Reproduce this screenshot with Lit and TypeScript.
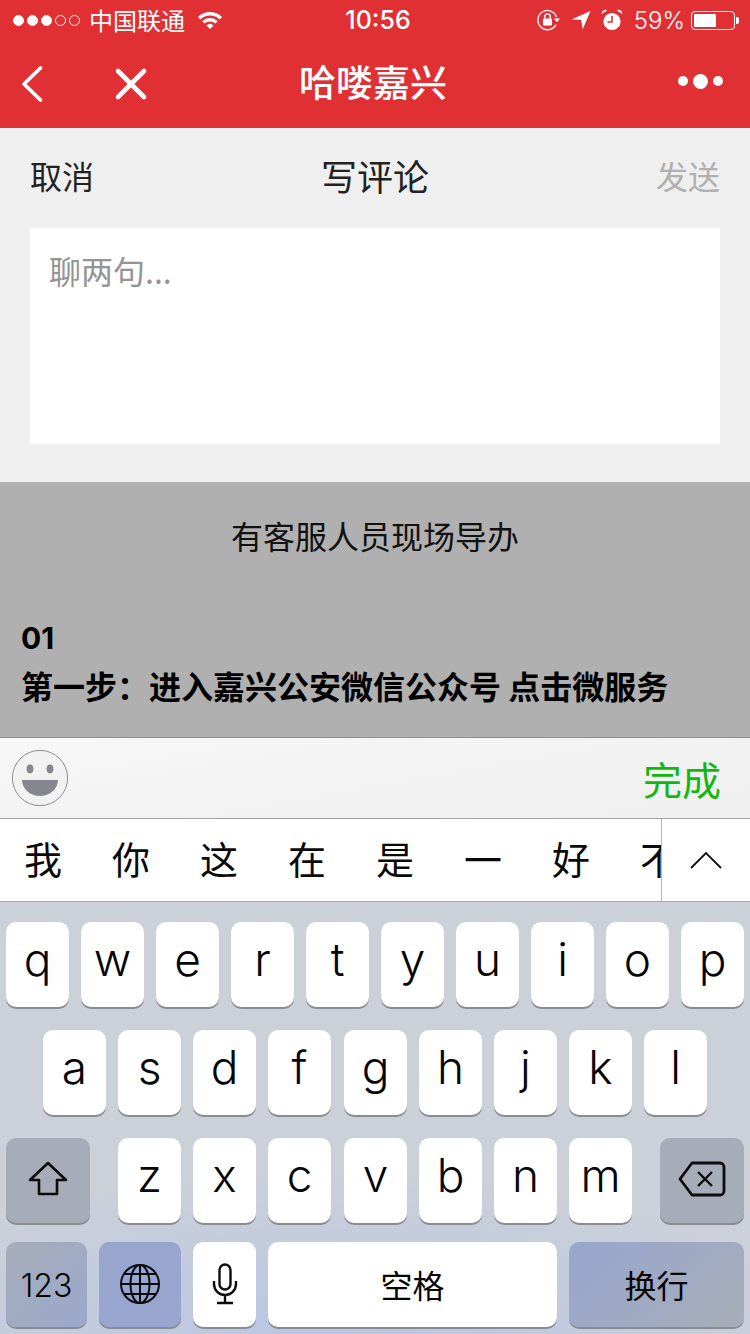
import { LitElement, html, css, svg, unsafeCSS } from "lit";
import { customElement } from "lit/decorators.js";

const CJK = unsafeCSS(`"Noto Sans CJK SC", "Inter", sans-serif`);

const wifiIcon = svg`
  <svg width="26" height="20" viewBox="0 0 26 20">
    <path d="M1 7 A17 17 0 0 1 25 7 L22.6 9.4 A13.6 13.6 0 0 0 3.4 9.4Z" fill="#fff"/>
    <path d="M5.2 11.2 A11.4 11.4 0 0 1 20.8 11.2 L18.4 13.6 A8 8 0 0 0 7.6 13.6Z" fill="#fff"/>
    <path d="M9.4 15.4 A5.4 5.4 0 0 1 16.6 15.4 L13 19Z" fill="#fff"/>
  </svg>`;

const rotationLockIcon = svg`
  <svg width="24" height="22" viewBox="0 0 24 22" fill="none">
    <path d="M19.6 8 A9.6 9.6 0 1 0 19 15.6" stroke="#fff" stroke-width="1.3"/>
    <path d="M17 9.6h6l-3 3.6Z" fill="#fff"/>
    <rect x="6" y="9.5" width="9" height="7" rx="1" fill="#fff"/>
    <path d="M7.8 9.5V7.6a2.7 2.7 0 0 1 5.4 0V9.5" stroke="#fff" stroke-width="1.4"/>
  </svg>`;

const locationIcon = svg`
  <svg width="20" height="20" viewBox="0 0 20 20">
    <path d="M19.5 1 L11.6 19.5 L10.2 9.8 L0.5 9.6Z" fill="#fff"/>
  </svg>`;

const alarmIcon = svg`
  <svg width="22" height="22" viewBox="0 0 22 22">
    <circle cx="11" cy="12.5" r="8.6" fill="#fff"/>
    <path d="M11 7V13H6.5" fill="none" stroke="#e03033" stroke-width="1.6"/>
    <path d="M0.6 5 A4 4 0 0 1 5.6 1 L6 1.6Z M21.4 5 A4 4 0 0 0 16.4 1 L16 1.6Z" fill="#fff"/>
  </svg>`;

const backIcon = svg`
  <svg width="26" height="38" viewBox="0 0 26 38" fill="none">
    <path d="M21.5 3 L5 19 L21.5 35" stroke="#fff" stroke-width="3.8" stroke-linecap="round" stroke-linejoin="round"/>
  </svg>`;

const closeIcon = svg`
  <svg width="34" height="34" viewBox="0 0 34 34" fill="none">
    <path d="M4 4 L30 30 M30 4 L4 30" stroke="#fff" stroke-width="4.6" stroke-linecap="round"/>
  </svg>`;

const smileIcon = svg`
  <svg width="58" height="58" viewBox="0 0 58 58">
    <circle cx="29" cy="29" r="27.6" fill="#f2f2f3" stroke="#8c8c90" stroke-width="1"/>
    <ellipse cx="19" cy="20" rx="3.4" ry="4.4" fill="#86868e"/>
    <ellipse cx="39" cy="20" rx="3.4" ry="4.4" fill="#86868e"/>
    <path d="M11 31 H47 A18 16 0 0 1 11 31Z" fill="#86868e"/>
  </svg>`;

const chevronIcon = svg`
  <svg width="34" height="20" viewBox="0 0 34 20" fill="none">
    <path d="M2 18 L17 3 L32 18" stroke="#111" stroke-width="1.8"/>
  </svg>`;

const shiftIcon = svg`
  <svg width="40" height="36" viewBox="0 0 40 36" fill="none">
    <path d="M20 2 L38 19 H29 V33 H11 V19 H2Z" stroke="#0c0c0e" stroke-width="2.6" stroke-linejoin="round"/>
  </svg>`;

const deleteIcon = svg`
  <svg width="48" height="36" viewBox="0 0 48 36" fill="none">
    <path d="M14 2 H42 A4 4 0 0 1 46 6 V30 A4 4 0 0 1 42 34 H14 L2 18Z" stroke="#0c0c0e" stroke-width="2.8" stroke-linejoin="round"/>
    <path d="M20 11 L34 25 M34 11 L20 25" stroke="#0c0c0e" stroke-width="2.4"/>
  </svg>`;

const globeIcon = svg`
  <svg width="42" height="42" viewBox="0 0 42 42" fill="none" stroke="#0c0c10" stroke-width="2">
    <circle cx="21" cy="21" r="19"/>
    <ellipse cx="21" cy="21" rx="9.5" ry="19"/>
    <path d="M21 2V40M2 21H40M5 11H37M5 31H37"/>
  </svg>`;

const micIcon = svg`
  <svg width="26" height="42" viewBox="0 0 26 42" fill="none" stroke="#0c0c0e" stroke-width="2.4">
    <rect x="7.5" y="1.5" width="11" height="25" rx="5.5"/>
    <path d="M2 18 V21 A11 11 0 0 0 24 21 V18 M13 32 V39 M5 40 H21"/>
  </svg>`;

@customElement("app-root")
export class AppRoot extends LitElement {
  static styles = css`
    :host {
      display: block;
      width: 750px;
      height: 1334px;
      overflow: hidden;
      background: #efeff0;
      font-family: ${CJK};
      color: #111;
    }

    .red { background: #e03033; height: 128px; color: #fff; }

    .status {
      display: flex;
      align-items: center;
      height: 40px;
      padding: 0 11px 0 13px;
    }
    .status-side { flex: 1; display: flex; align-items: center; }
    .status-side.end { justify-content: flex-end; }
    .dot {
      width: 11px;
      height: 11px;
      margin-right: 3px;
      border-radius: 50%;
      box-sizing: border-box;
      border: 1px solid #fff;
    }
    .dot.on { background: #fff; }
    .carrier { font-size: 24px; margin-left: 6px; line-height: 40px; }
    .wifi { display: flex; margin-left: 12px; }
    .time { font-family: "Inter", sans-serif; font-size: 25px; font-weight: 500; margin-left: 4px; }
    .status-icon { display: flex; margin-right: 10px; }
    .percent { font-family: "Inter", sans-serif; font-size: 24px; font-weight: 300; margin-left: 1px; }
    .battery {
      display: flex;
      align-items: center;
      margin-left: 6px;
    }
    .battery-body {
      width: 44px;
      height: 19px;
      padding: 2px;
      box-sizing: border-box;
      border: 1.5px solid #fff;
      border-radius: 4px;
    }
    .battery-fill { height: 100%; width: 59%; background: #fff; border-radius: 1px; }
    .battery-nub { width: 3px; height: 7px; background: #fff; border-radius: 0 2px 2px 0; margin-left: 1px; }

    .nav {
      display: grid;
      grid-template-columns: 1fr auto 1fr;
      align-items: center;
      height: 88px;
    }
    .nav-left { display: flex; align-items: center; padding-left: 19px; gap: 69px; }
    .nav-left svg { display: block; }
    .title { font-size: 37px; font-weight: 500; padding-right: 4px; padding-bottom: 6px; }
    .more { display: flex; align-items: center; justify-content: flex-end; gap: 5px; padding-right: 27px; padding-bottom: 6px; }
    .more span { width: 10px; height: 10px; border-radius: 50%; background: #fff; }
    .more span.big { width: 15px; height: 15px; }

    .composer { height: 354px; padding: 0 30px; box-sizing: border-box; }
    .composer-head {
      display: grid;
      grid-template-columns: 1fr auto 1fr;
      align-items: center;
      height: 100px;
      padding-bottom: 6px;
      box-sizing: border-box;
      font-size: 32px;
      color: #222;
    }
    .composer-head .heading { font-size: 36px; font-weight: 400; color: #222; }
    .composer-head .send { text-align: right; color: #b0b0b0; }
    .input {
      height: 216px;
      background: #fff;
      padding: 21px 19px;
      box-sizing: border-box;
      font-size: 32px;
      line-height: 42px;
      color: #949494;
    }

    .article { height: 255px; background: #b0b0b0; box-sizing: border-box; padding: 0 21px; color: #000; }
    .article-title { text-align: center; font-size: 32px; line-height: 36px; padding-top: 35px; color: #111; }
    .article-num { font-family: "Inter", sans-serif; font-size: 30px; font-weight: 700; margin-top: 65px; line-height: 40px; }
    .article-step { font-size: 32px; font-weight: 700; line-height: 40px; margin-top: 7px; white-space: nowrap; }

    .toolbar {
      display: flex;
      align-items: center;
      justify-content: space-between;
      height: 82px;
      box-sizing: border-box;
      padding: 0 29px 0 11px;
      border-top: 1px solid #8f8f8f;
      border-bottom: 1px solid #a6a6a8;
      background: linear-gradient(170deg, #f7f7f7, #efeff0);
    }
    .toolbar svg { display: block; }
    .done { font-size: 39px; color: #12b810; }

    .candidates {
      display: flex;
      height: 83px;
      background: #fff;
      border-bottom: 1px solid #a8a8aa;
      box-sizing: border-box;
    }
    .candidate-list {
      width: 662px;
      overflow: hidden;
      display: flex;
      gap: 50px;
      padding: 0 0 6px 24px;
      box-sizing: border-box;
      align-items: center;
      font-size: 38px;
      color: #0a0a0a;
      white-space: nowrap;
      border-right: 1px solid #b4b4b6;
    }
    .expand { flex: 1; display: flex; align-items: center; justify-content: center; }

    .keyboard {
      height: 432px;
      box-sizing: border-box;
      padding-top: 20px;
      background:
        radial-gradient(ellipse 480px 170px at 330px 440px, #b9c5e3 0%, rgba(185, 197, 227, 0) 100%),
        #cbd0d9;
    }
    .row { display: flex; justify-content: center; gap: 12px; height: 85px; margin-bottom: 23px; }
    .row.last { margin-top: -4px; margin-bottom: 0; }
    .key {
      width: 63px;
      height: 85px;
      box-sizing: border-box;
      display: flex;
      align-items: center;
      justify-content: center;
      background: #fff;
      border-radius: 10px;
      box-shadow: 0 2px 0 #8a8c92;
      font-family: "Inter", sans-serif;
      font-size: 46px;
      font-weight: 300;
      color: #050505;
      padding-bottom: 11px;
    }
    .key.wide-gap { margin-left: 1px; }
    .key.icon { padding-bottom: 4px; }
    .key.dark { background: #a7adb8; }
    .key.blue-end { background: linear-gradient(135deg, #a7adb8, #9aa8cc); }
    .key.blue { background: #98a6cf; }
    .key.blue-start { background: linear-gradient(135deg, #97a6ce, #a7adb8); }
    .key.cjk { font-family: ${CJK}; font-size: 32px; font-weight: 400; padding-bottom: 2px; }
    .key svg { display: block; }
    .last .key.icon { padding-bottom: 1px; }
    .spacer { width: 4px; }
    .w84 { width: 84px; }
    .w81 { width: 81px; }
    .w82 { width: 82px; }
    .w289 { width: 289px; }
    .w175 { width: 175px; }
    .key.small { font-size: 32px; font-weight: 300; padding: 1px 0 0; }
  `;

  private letters(chars: string, wideGapBefore = "") {
    return [...chars].map(
      (c) => html`<div class="key ${c === wideGapBefore ? "wide-gap" : ""}">${c}</div>`
    );
  }

  render() {
    return html`
      <div class="red">
        <div class="status">
          <div class="status-side">
            ${[1, 1, 1, 0, 0].map((on) => html`<span class="dot ${on ? "on" : ""}"></span>`)}
            <span class="carrier">中国联通</span>
            <span class="wifi">${wifiIcon}</span>
          </div>
          <div class="time">10:56</div>
          <div class="status-side end">
            <span class="status-icon">${rotationLockIcon}</span>
            <span class="status-icon">${locationIcon}</span>
            <span class="status-icon">${alarmIcon}</span>
            <span class="percent">59%</span>
            <span class="battery">
              <span class="battery-body"><div class="battery-fill"></div></span>
              <span class="battery-nub"></span>
            </span>
          </div>
        </div>
        <div class="nav">
          <div class="nav-left">${backIcon}${closeIcon}</div>
          <div class="title">哈喽嘉兴</div>
          <div class="more"><span></span><span class="big"></span><span></span></div>
        </div>
      </div>

      <div class="composer">
        <div class="composer-head">
          <span>取消</span>
          <span class="heading">写评论</span>
          <span class="send">发送</span>
        </div>
        <div class="input">聊两句...</div>
      </div>

      <div class="article">
        <div class="article-title">有客服人员现场导办</div>
        <div class="article-num">01</div>
        <div class="article-step">第一步：进入嘉兴公安微信公众号 点击微服务</div>
      </div>

      <div class="toolbar">
        ${smileIcon}
        <span class="done">完成</span>
      </div>

      <div class="candidates">
        <div class="candidate-list">
          ${[..."我你这在是一好不"].map((c) => html`<span>${c}</span>`)}
        </div>
        <div class="expand">${chevronIcon}</div>
      </div>

      <div class="keyboard">
        <div class="row">${this.letters("qwertyuiop")}</div>
        <div class="row">${this.letters("asdfghjkl", "g")}</div>
        <div class="row">
          <div class="key icon dark w84">${shiftIcon}</div>
          <div class="spacer"></div>
          ${this.letters("zxcvbnm", "v")}
          <div class="spacer"></div>
          <div class="key icon dark w84">${deleteIcon}</div>
        </div>
        <div class="row last">
          <div class="key blue-end w81 small">123</div>
          <div class="key icon blue w82">${globeIcon}</div>
          <div class="key icon">${micIcon}</div>
          <div class="key cjk w289">空格</div>
          <div class="key blue-start cjk w175">换行</div>
        </div>
      </div>
    `;
  }
}
